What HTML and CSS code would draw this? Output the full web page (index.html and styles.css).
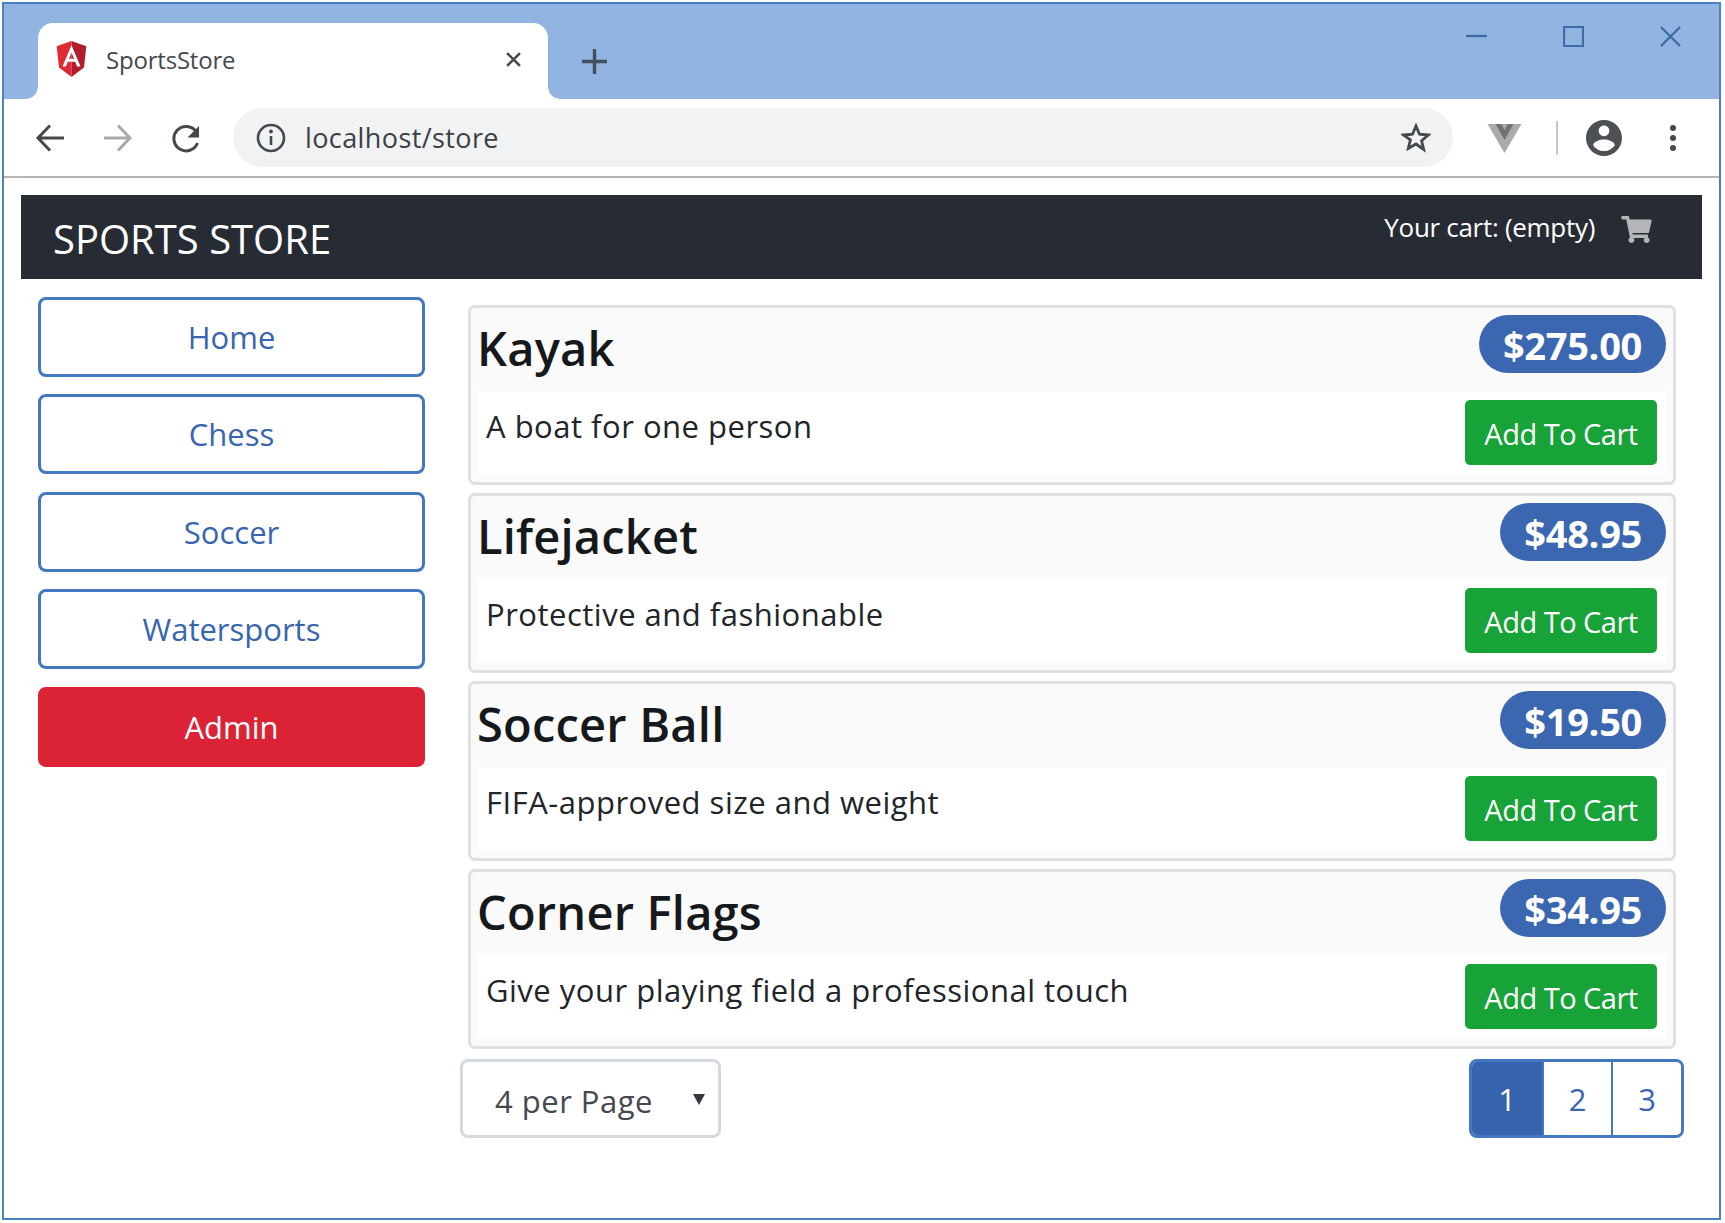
FILE: index.html
```html
<!DOCTYPE html>
<html lang="en">
<head>
    <meta charset="UTF-8">
    <title>SportsStore</title>
    <link rel="stylesheet" href="styles.css">
</head>
<body>
    <div class="window">
        <div class="titlebar">
            <div class="tab">
                <svg class="tab-logo" viewBox="0 0 28 34">
                    <path d="M14 0L0 5l2.200 20L14 34z" fill="#dd2a35"/>
                    <path d="M14 0l14 5-2.200 20L14 34z" fill="#b01e2c"/>
                    <path d="M14 4L5.500 24h3.200l1.800-4.400h7l1.800 4.400h3.200zm0 6.800l2.400 6h-4.800z" fill="#fff"/>
                </svg>
                <span class="tab-title">SportsStore</span>
                <svg class="tab-close" viewBox="0 0 14 14"><path d="M1 1l12 12M13 1L1 13"/></svg>
            </div>
            <svg class="new-tab" viewBox="0 0 22 22"><path d="M11 0v22M0 11h22"/></svg>
            <div class="win-controls">
                <svg viewBox="0 0 22 22"><path d="M0 10.500h22"/></svg>
                <svg viewBox="0 0 22 22"><path d="M1 1h20v20H1z"/></svg>
                <svg viewBox="0 0 22 22"><path d="M1 1l20 20M21 1L1 21"/></svg>
            </div>
        </div>

        <div class="toolbar">
            <svg class="tool back" viewBox="0 0 30 30"><path d="M29 15H3M15 2.500L3 15l12 12.500"/></svg>
            <svg class="tool forward" viewBox="0 0 30 30"><path d="M1 15h26M15 2.500L27 15 15 27.500"/></svg>
            <svg class="tool reload" viewBox="0 0 30 30"><path d="M26.500 20a12.200 12.200 0 1 1-1.500-11.500"/><path class="solid" d="M28 3v11.500H16.500z"/></svg>
            <div class="omnibox">
                <svg class="info" viewBox="0 0 30 30">
                    <circle cx="15" cy="15" r="13"/>
                    <path d="M15 13v9"/>
                    <circle class="solid" cx="15" cy="8.500" r="1.900"/>
                </svg>
                <span class="url">localhost/store</span>
                <svg class="star" viewBox="0 0 30 30"><path d="M15 3l3.500 8.200 8.900.8-6.800 5.800 2.100 8.700L15 21l-7.700 4.500 2.100-8.700L2.600 12l8.900-.8z"/></svg>
            </div>
            <svg class="ext" viewBox="0 0 34 30">
                <path d="M0 1h34L17 30z" fill="#a9aaac"/>
                <path d="M8 1h6l3 6 3-6h6L17 17z" fill="#6f7275"/>
            </svg>
            <span class="sep"></span>
            <svg class="avatar" viewBox="2 2 20 20"><path d="M12 2C6.480 2 2 6.480 2 12s4.480 10 10 10 10-4.480 10-10S17.520 2 12 2zm0 3c1.660 0 3 1.340 3 3s-1.340 3-3 3-3-1.340-3-3 1.340-3 3-3zm0 14.200c-2.500 0-4.710-1.280-6-3.220.03-1.990 4-3.080 6-3.080 1.990 0 5.970 1.090 6 3.080-1.290 1.940-3.500 3.220-6 3.220z"/></svg>
            <div class="dots"><i></i><i></i><i></i></div>
        </div>

        <div class="page">
            <nav class="navbar">
                <span class="brand">SPORTS STORE</span>
                <div class="cart">
                    <span>Your cart: (empty)</span>
                    <svg viewBox="0 0 576 512"><path d="M528.12 301.319l47.273-208C578.806 78.301 567.391 64 551.99 64H159.208l-9.166-44.81C147.758 8.021 137.93 0 126.529 0H24C10.745 0 0 10.745 0 24v16c0 13.255 10.745 24 24 24h69.883l70.248 343.435C147.325 417.1 136 435.222 136 456c0 30.928 25.072 56 56 56s56-25.072 56-56c0-15.674-6.447-29.835-16.824-40h209.647C430.447 426.165 424 440.326 424 456c0 30.928 25.072 56 56 56s56-25.072 56-56c0-22.172-12.888-41.332-31.579-50.405l5.517-24.276c3.413-15.018-8.002-29.319-23.403-29.319H218.117l-6.545-32h293.145c11.206 0 20.92-7.754 23.403-18.681z"/></svg>
                </div>
            </nav>

            <div class="content">
                <aside class="sidebar">
                    <button class="cat-btn">Home</button>
                    <button class="cat-btn">Chess</button>
                    <button class="cat-btn">Soccer</button>
                    <button class="cat-btn">Watersports</button>
                    <button class="cat-btn admin">Admin</button>
                </aside>

                <main class="products">
                    <div class="card">
                        <div class="card-head">
                            <h4>Kayak</h4>
                            <span class="price">$275.00</span>
                        </div>
                        <div class="card-body">
                            <span class="desc">A boat for one person</span>
                            <button class="add-btn">Add To Cart</button>
                        </div>
                    </div>
                    <div class="card">
                        <div class="card-head">
                            <h4>Lifejacket</h4>
                            <span class="price">$48.95</span>
                        </div>
                        <div class="card-body">
                            <span class="desc">Protective and fashionable</span>
                            <button class="add-btn">Add To Cart</button>
                        </div>
                    </div>
                    <div class="card">
                        <div class="card-head">
                            <h4>Soccer Ball</h4>
                            <span class="price">$19.50</span>
                        </div>
                        <div class="card-body">
                            <span class="desc">FIFA-approved size and weight</span>
                            <button class="add-btn">Add To Cart</button>
                        </div>
                    </div>
                    <div class="card">
                        <div class="card-head">
                            <h4>Corner Flags</h4>
                            <span class="price">$34.95</span>
                        </div>
                        <div class="card-body">
                            <span class="desc">Give your playing field a professional touch</span>
                            <button class="add-btn">Add To Cart</button>
                        </div>
                    </div>

                    <div class="pager-row">
                        <div class="per-page">
                            <span>4 per Page</span>
                            <i class="caret"></i>
                        </div>
                        <div class="pager">
                            <button class="page-btn active">1</button>
                            <button class="page-btn">2</button>
                            <button class="page-btn">3</button>
                        </div>
                    </div>
                </main>
            </div>
        </div>
    </div>
</body>
</html>
```

FILE: styles.css
```css
* {
    box-sizing: border-box;
}

body {
    margin: 0;
    background: #fff;
    font-family: "Open Sans", sans-serif;
    color: #212529;
}

.window {
    width: 1719px;
    height: 1218px;
    margin: 2px 0 0 2px;
    border: 2px solid #4d7fc4;
    background: #fff;
}

/* browser chrome */
.titlebar {
    height: 95px;
    background: #92b4e0;
    display: flex;
    align-items: flex-start;
    padding-left: 34px;
}

.tab {
    position: relative;
    width: 510px;
    height: 76px;
    margin-top: 19px;
    background: #fff;
    border-radius: 15px 15px 0 0;
    display: flex;
    align-items: center;
    padding: 0 27px 0 17px;
}

.tab::before,
.tab::after {
    content: "";
    position: absolute;
    bottom: 0;
    width: 12px;
    height: 12px;
    background: radial-gradient(circle at 0 0, #92b4e0 11.5px, #fff 12px);
}

.tab::before {
    left: -12px;
}

.tab::after {
    right: -12px;
    background: radial-gradient(circle at 100% 0, #92b4e0 11.5px, #fff 12px);
}

.tab-logo {
    width: 33px;
    height: 36px;
    margin-top: -4px;
}

.tab-title {
    flex: 1;
    margin: -4px 0 0 18px;
    font-size: 24px;
    color: #45484c;
    letter-spacing: -0.2px;
}

.tab-close {
    width: 15px;
    height: 15px;
    margin-top: -3px;
    fill: none;
    stroke: #45484c;
    stroke-width: 2.4;
}

.new-tab {
    width: 25px;
    height: 25px;
    margin: 45px 0 0 34px;
    fill: none;
    stroke: #45505c;
    stroke-width: 3;
}

.win-controls {
    margin: 22px 0 0 auto;
    padding-right: 38px;
    display: flex;
    gap: 76px;
}

.win-controls svg {
    width: 21px;
    height: 21px;
    fill: none;
    stroke: #3f6ca6;
    stroke-width: 2.4;
}

.toolbar {
    height: 79px;
    border-bottom: 2px solid #b4b4b4;
    display: flex;
    align-items: center;
    padding-left: 31px;
}

.tool {
    width: 30px;
    height: 30px;
    margin-right: 38px;
    fill: none;
    stroke: #45484c;
    stroke-width: 3;
}

.tool.forward {
    stroke: #a7a9ab;
}

.tool .solid {
    fill: #45484c;
    stroke: none;
}

.tool.reload {
    margin-right: 32px;
}

.omnibox {
    width: 1220px;
    height: 59px;
    background: #f0f2f3;
    border-radius: 30px;
    display: flex;
    align-items: center;
    padding: 0 22px 0 23px;
}

.info {
    width: 30px;
    height: 30px;
    fill: none;
    stroke: #45484c;
    stroke-width: 2.6;
}

.info .solid {
    fill: #45484c;
    stroke: none;
}

.url {
    flex: 1;
    margin-left: 19px;
    font-size: 27px;
    color: #3c4043;
    letter-spacing: 0.4px;
}

.star {
    width: 30px;
    height: 30px;
    fill: none;
    stroke: #45484c;
    stroke-width: 2.8;
}

.ext {
    width: 35px;
    height: 30px;
    margin-left: 34px;
}

.sep {
    width: 2px;
    height: 34px;
    margin-left: 34px;
    background: #c8c9ca;
}

.avatar {
    width: 36px;
    height: 36px;
    margin-left: 28px;
    fill: #4d5156;
}

.dots {
    margin-left: 48px;
    display: flex;
    flex-direction: column;
    gap: 4px;
}

.dots i {
    display: block;
    width: 6px;
    height: 6px;
    border-radius: 50%;
    background: #45484c;
}

/* the store page */
.page {
    padding: 17px 16px 0 17px;
}

.navbar {
    width: 1681px;
    height: 84px;
    background: #272b33;
    color: #fff;
    display: flex;
    justify-content: space-between;
    padding: 0 50px 0 32px;
}

.brand {
    font-size: 40px;
    line-height: 88px;
}

.cart {
    display: flex;
    gap: 26px;
    padding-top: 14px;
    font-size: 26px;
    letter-spacing: -0.3px;
}

.cart svg {
    width: 31px;
    height: 27px;
    margin-top: 7px;
    fill: #b4b5b8;
}

.content {
    display: flex;
}

.sidebar {
    width: 387px;
    margin: 17.5px 0 0 17px;
    display: flex;
    flex-direction: column;
    gap: 17.5px;
}

.cat-btn {
    height: 80px;
    background: #fff;
    border: 3px solid #4378c0;
    border-radius: 8px;
    font-family: "Open Sans", sans-serif;
    font-size: 31px;
    color: #3765b0;
    padding: 0;
}

.cat-btn.admin {
    background: #dc2336;
    border-color: #dc2336;
    color: #fff;
}

.products {
    width: 1224px;
    margin: 26px 0 0 35px;
}

.card {
    height: 180px;
    margin: 0 8px 8px;
    border: 3px solid #e0e0e0;
    border-radius: 7px;
    padding: 0 7px 7px 6px;
    background: #fafafa;
}

.card-head {
    height: 83px;
    display: flex;
    justify-content: space-between;
    align-items: flex-start;
}

.card-head h4 {
    margin: 0;
    font-size: 47px;
    font-weight: 600;
    line-height: 80px;
    letter-spacing: 0.2px;
    color: #16191c;
}

.price {
    height: 58px;
    margin-top: 7px;
    padding: 0 24px;
    border-radius: 29px;
    background: #3b66b0;
    color: #fff;
    font-size: 38px;
    font-weight: 700;
    line-height: 60px;
    letter-spacing: -0.3px;
}

.card-body {
    height: 84px;
    background: #fff;
    display: flex;
    justify-content: space-between;
    align-items: flex-start;
    padding: 9px 9px 0 9px;
}

.desc {
    font-size: 31px;
    line-height: 52px;
    color: #212529;
    letter-spacing: 0.5px;
}

.add-btn {
    width: 192px;
    height: 65px;
    background: #17a338;
    border: none;
    border-radius: 5px;
    color: #fff;
    font-family: "Open Sans", sans-serif;
    font-size: 29px;
    letter-spacing: -0.5px;
    padding: 2px 0 0;
}

.pager-row {
    margin-top: 10px;
    display: flex;
    justify-content: space-between;
}

.per-page {
    position: relative;
    width: 261px;
    height: 79px;
    border: 3px solid #d5d8de;
    border-radius: 8px;
    padding-left: 32px;
    font-size: 31px;
    line-height: 78px;
    color: #45494f;
    letter-spacing: 0.5px;
}

.caret {
    position: absolute;
    right: 13px;
    top: 32px;
    border-left: 6px solid transparent;
    border-right: 6px solid transparent;
    border-top: 11px solid #343a40;
}

.pager {
    display: flex;
    width: 215px;
    height: 79px;
    border: 3px solid #4378c0;
    border-radius: 8px;
    overflow: hidden;
}

.page-btn {
    width: 69px;
    background: #fff;
    border: none;
    border-left: 2px solid #4378c0;
    font-family: "Open Sans", sans-serif;
    font-size: 31px;
    color: #3765b0;
    padding: 0;
}

.page-btn:last-child {
    flex: 1;
}

.page-btn.active {
    width: 70px;
    background: #3563ad;
    border-left: none;
    color: #fff;
}
```
